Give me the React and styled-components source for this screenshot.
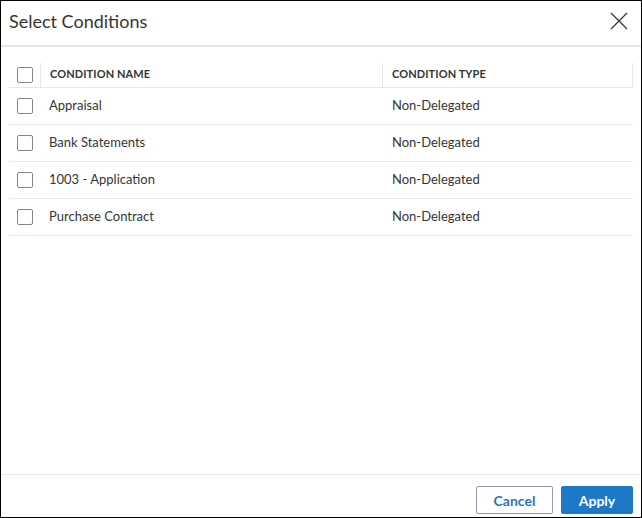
import React from "react";
import styled, { createGlobalStyle } from "styled-components";

const GlobalStyle = createGlobalStyle`
  html, body {
    margin: 0;
    padding: 0;
    background: #ffffff;
  }
  * {
    box-sizing: border-box;
  }
`;

const conditions = [
  { id: 1, name: "Appraisal", type: "Non-Delegated" },
  { id: 2, name: "Bank Statements", type: "Non-Delegated" },
  { id: 3, name: "1003 - Application", type: "Non-Delegated" },
  { id: 4, name: "Purchase Contract", type: "Non-Delegated" },
];

function App() {
  return (
    <>
      <GlobalStyle />
      <Modal>
        <Header>
          <Title>Select Conditions</Title>
          <CloseButton aria-label="Close">
            <svg width="18" height="18" viewBox="0 0 18 18">
              <path d="M1 1 L17 17 M17 1 L1 17" stroke="#333" strokeWidth="1.2" fill="none" />
            </svg>
          </CloseButton>
        </Header>
        <Body>
          <Table>
            <HeadRow>
              <CheckCell $head>
                <Checkbox type="checkbox" />
              </CheckCell>
              <HeadCell>Condition Name</HeadCell>
              <HeadCell>Condition Type</HeadCell>
            </HeadRow>
            {conditions.map((c) => (
              <Row key={c.id}>
                <CheckCell>
                  <Checkbox type="checkbox" />
                </CheckCell>
                <Cell>{c.name}</Cell>
                <Cell $type>{c.type}</Cell>
              </Row>
            ))}
          </Table>
        </Body>
        <Footer>
          <Button>Cancel</Button>
          <Button $primary>Apply</Button>
        </Footer>
      </Modal>
    </>
  );
}

const Modal = styled.div`
  width: 642px;
  height: 518px;
  border: 1px solid #000;
  display: flex;
  flex-direction: column;
  font-family: Lato, "Open Sans", sans-serif;
  color: #333;
  background: #fff;
`;

const Header = styled.div`
  height: 46px;
  border-bottom: 2px solid #e6e6e6;
  display: flex;
  align-items: center;
  justify-content: space-between;
  padding: 0 13px 4px 8px;
`;

const Title = styled.h1`
  margin: 0;
  font-size: 18px;
  font-weight: 400;
  color: #353535;
`;

const CloseButton = styled.button`
  border: none;
  background: none;
  padding: 0;
  width: 18px;
  height: 18px;
  display: flex;
  cursor: pointer;
`;

const Body = styled.div`
  flex: 1;
  padding: 16px 8px 0 8px;
`;

const Table = styled.div`
  display: flex;
  flex-direction: column;
`;

const HeadRow = styled.div`
  display: grid;
  grid-template-columns: 32px 342px 1fr;
  height: 25px;
  border-bottom: 1px solid #e6e6e6;
  border-right: 1px solid #e6e6e6;
`;

const Row = styled.div`
  display: grid;
  grid-template-columns: 32px 342px 1fr;
  height: 37px;
  border-bottom: 1px solid #ebebeb;
`;

const CheckCell = styled.div`
  display: flex;
  align-items: center;
  padding-left: 8px;
  border-right: ${(p) => (p.$head ? "1px solid #e6e6e6" : "none")};
`;

const Checkbox = styled.input`
  appearance: none;
  margin: 0;
  width: 16px;
  height: 16px;
  border: 1px solid #7d8694;
  border-radius: 2px;
  background: #fff;
`;

const HeadCell = styled.div`
  display: flex;
  align-items: center;
  padding: 0 0 3px 9px;
  font-size: 11px;
  font-weight: 700;
  text-transform: uppercase;
  color: #353535;
  letter-spacing: 0.1px;
  &:nth-child(2) {
    border-right: 1px solid #e6e6e6;
  }
`;

const Cell = styled.div`
  display: flex;
  align-items: center;
  padding: 0 0 3px ${(p) => (p.$type ? "9px" : "8px")};
  font-size: 13px;
  color: #353535;
`;

const Footer = styled.div`
  height: 43px;
  border-top: 1px solid #e6e6e6;
  display: flex;
  justify-content: flex-end;
  align-items: flex-start;
  gap: 8px;
  padding: 11px 8px 0 0;
`;

const Button = styled.button`
  height: 28px;
  min-width: ${(p) => (p.$primary ? "72px" : "77px")};
  border-radius: 2px;
  font-family: Lato, "Open Sans", sans-serif;
  font-size: 14px;
  font-weight: 700;
  cursor: pointer;
  border: 1px solid ${(p) => (p.$primary ? "#1e78c8" : "#8f9aab")};
  background: ${(p) => (p.$primary ? "#1e78c8" : "#fff")};
  color: ${(p) => (p.$primary ? "#fff" : "#2a73c0")};
`;

export default App;
